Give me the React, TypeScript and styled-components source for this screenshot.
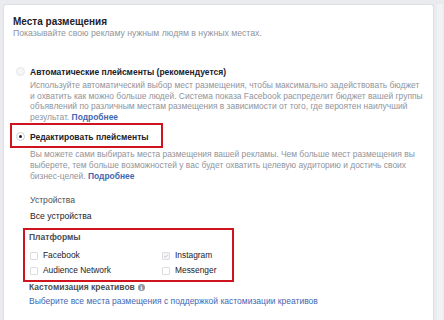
import React from 'react';
import styled, { createGlobalStyle } from 'styled-components';

const GlobalStyle = createGlobalStyle`
  html, body {
    margin: 0;
    padding: 0;
    background: #e9ebee;
    font-family: "Liberation Sans", Arial, sans-serif;
    -webkit-font-smoothing: antialiased;
  }
`;

export default function App() {
  return (
    <>
      <GlobalStyle />
      <SPage>
        <SCard>
          <STitle>Места размещения</STitle>
          <SSubtitle>Показывайте свою рекламу нужным людям в нужных местах.</SSubtitle>

          <SOptionRow first>
            <SRadio />
            <SOptionLabel>Автоматические плейсменты (рекомендуется)</SOptionLabel>
          </SOptionRow>
          <SDescription>
            Используйте автоматический выбор мест размещения, чтобы максимально задействовать бюджет
            <br />
            и охватить как можно больше людей. Система показа Facebook распределит бюджет вашей группы
            <br />
            объявлений по различным местам размещения в зависимости от того, где вероятен наилучший
            <br />
            результат. <SLink>Подробнее</SLink>
          </SDescription>

          {/* выделенная опция */}
          <SMarked>
            <SOptionRow>
              <SRadio checked />
              <SOptionLabel>Редактировать плейсменты</SOptionLabel>
            </SOptionRow>
          </SMarked>
          <SDescription>
            Вы можете сами выбирать места размещения вашей рекламы. Чем больше мест размещения вы
            <br />
            выберете, тем больше возможностей у вас будет охватить целевую аудиторию и достичь своих
            <br />
            бизнес-целей. <SLink>Подробнее</SLink>
          </SDescription>

          <SFieldLabel>Устройства</SFieldLabel>
          <SFieldValue>Все устройства</SFieldValue>

          <SPlatforms>
            <SPlatformsTitle>Платформы</SPlatformsTitle>
            <SPlatformGrid>
              <SCheckRow>
                <SCheckbox />
                <span>Facebook</span>
              </SCheckRow>
              <SCheckRow>
                <SCheckbox checked>
                  <svg width="8" height="8" viewBox="0 0 10 10">
                    <path d="M2 5.2 L4.2 7.4 L8.2 2.4" fill="none" stroke="#bec3c9" strokeWidth="1.4" />
                  </svg>
                </SCheckbox>
                <span>Instagram</span>
              </SCheckRow>
              <SCheckRow>
                <SCheckbox />
                <span>Audience Network</span>
              </SCheckRow>
              <SCheckRow>
                <SCheckbox />
                <span>Messenger</span>
              </SCheckRow>
            </SPlatformGrid>
          </SPlatforms>

          <SCustomTitle>
            Кастомизация креативов
            <SInfo>i</SInfo>
          </SCustomTitle>
          <SCustomLink>Выберите все места размещения с поддержкой кастомизации креативов</SCustomLink>
        </SCard>
        <SScrollbar />
      </SPage>
    </>
  );
}

const SPage = styled.div`
  display: flex;
  height: 320px;
  overflow: hidden;
  padding-top: 4px;
  box-sizing: border-box;
`;

const SCard = styled.div`
  margin-left: 3px;
  width: 431px;
  box-sizing: border-box;
  background: #ffffff;
  border: 1px solid #dddfe2;
  border-bottom: none;
  border-radius: 3px 3px 0 0;
  padding: 11px 0 0 9px;
`;

const SScrollbar = styled.div`
  width: 6px;
  margin-left: 3px;
  background: #f1f2f4;
`;

const STitle = styled.div`
  font-size: 10px;
  font-weight: 700;
  line-height: 12px;
  color: #1d2129;
`;

const SSubtitle = styled.div`
  font-size: 8.7px;
  line-height: 11px;
  color: #90949c;
`;

const SOptionRow = styled.div<{ first?: boolean }>`
  display: flex;
  align-items: center;
  gap: 5px;
  padding-left: 3px;
  height: 15px;
  margin-top: ${({ first }) => (first ? '25px' : '0')};
`;

const SMarked = styled.div`
  width: 153px;
  box-sizing: border-box;
  margin: 1px 0 0 -3px;
  padding: 4px 0 2px 1px;
  border: 2px solid #d0141f;
`;

const SRadio = styled.span<{ checked?: boolean }>`
  width: 9px;
  height: 9px;
  border-radius: 50%;
  box-sizing: border-box;
  flex-shrink: 0;
  background: ${({ checked }) => (checked ? '#ffffff' : '#f5f6f7')};
  border: 1px solid ${({ checked }) => (checked ? '#ccd0d5' : '#e4e6e9')};
  display: flex;
  align-items: center;
  justify-content: center;
  &::after {
    content: '';
    display: ${({ checked }) => (checked ? 'block' : 'none')};
    width: 3px;
    height: 3px;
    border-radius: 50%;
    background: #1d2129;
  }
`;

const SOptionLabel = styled.span`
  font-size: 8.5px;
  font-weight: 700;
  color: #1d2129;
`;

const SDescription = styled.div`
  margin-top: 1px;
  padding-left: 17px;
  white-space: nowrap;
  font-size: 8.45px;
  line-height: 10.6px;
  color: #90949c;
`;

const SLink = styled.span`
  color: #4267b2;
  font-weight: 700;
`;

const SFieldLabel = styled.div`
  margin: 14px 0 0 17px;
  font-size: 8.6px;
  line-height: 11px;
  color: #4b4f56;
`;

const SFieldValue = styled.div`
  margin: 5px 0 0 17px;
  font-size: 8.6px;
  line-height: 11px;
  color: #1d2129;
`;

const SPlatforms = styled.div`
  margin: 6px 0 0 10px;
  width: 211px;
  height: 54px;
  box-sizing: border-box;
  border: 2px solid #d0141f;
  padding: 2px 0 0 4px;
`;

const SPlatformsTitle = styled.div`
  font-size: 8.5px;
  font-weight: 700;
  line-height: 11px;
  color: #4b4f56;
`;

const SPlatformGrid = styled.div`
  display: grid;
  grid-template-columns: 132px 1fr;
  row-gap: 4px;
  margin-top: 7px;
  padding-left: 1px;
`;

const SCheckRow = styled.div`
  display: flex;
  align-items: center;
  gap: 5px;
  font-size: 8.4px;
  line-height: 11px;
  color: #1d2129;
`;

const SCheckbox = styled.span<{ checked?: boolean }>`
  width: 8px;
  height: 8px;
  box-sizing: border-box;
  border: 1px solid #dadde1;
  border-radius: 1px;
  background: ${({ checked }) => (checked ? '#f5f6f7' : '#ffffff')};
  display: flex;
  align-items: center;
  justify-content: center;
  flex-shrink: 0;
`;

const SCustomTitle = styled.div`
  display: flex;
  align-items: center;
  gap: 3px;
  margin: 0 0 0 16px;
  font-size: 8.5px;
  font-weight: 700;
  line-height: 11px;
  color: #4b4f56;
`;

const SInfo = styled.span`
  width: 7px;
  height: 7px;
  border-radius: 50%;
  background: #8d949e;
  color: #ffffff;
  font-size: 6px;
  font-weight: 700;
  line-height: 7px;
  text-align: center;
  font-family: "DejaVu Serif", serif;
`;

const SCustomLink = styled.div`
  margin: 3px 0 0 16px;
  font-size: 8.5px;
  line-height: 11px;
  color: #4267b2;
`;
